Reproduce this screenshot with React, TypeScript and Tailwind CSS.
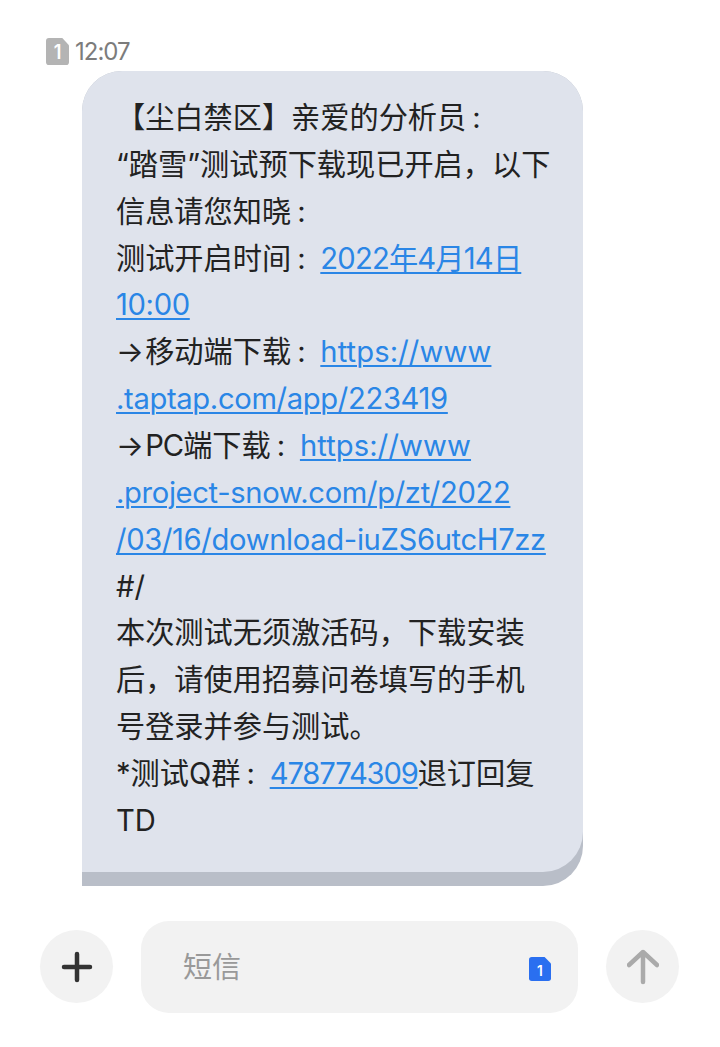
import React from "react"

const FONT = "font-['Inter','Noto_Sans_CJK_SC',sans-serif]"

const Link = ({ children, tracking = "tracking-[-0.35px]" }: { children: React.ReactNode; tracking?: string }) => (
  <span className={`${tracking} text-[#2a86e6] underline decoration-[2px] underline-offset-[3px]`}>{children}</span>
)

// colon takes a full-width box in the reference, a little left of centre
const Colon = () => <span className="inline-block w-[1em] pl-[6px] text-left">:</span>

const Arrow = () => <span className="inline-block w-[1em]">→</span>

const Line = ({ children }: { children: React.ReactNode }) => (
  <div className="h-[46.87px] whitespace-nowrap leading-[46.87px]">{children}</div>
)

const SimIcon = ({ className, digitSize }: { className: string; digitSize: number }) => (
  <svg viewBox="0 0 24 26" preserveAspectRatio="none" className={className}>
    <path d="M3 0H17L24 7V23a3 3 0 0 1-3 3H3a3 3 0 0 1-3-3V3a3 3 0 0 1 3-3Z" fill="currentColor" />
    <text x="12" y="20.5" textAnchor="middle" fontSize={digitSize} fontWeight="600" fontFamily="Inter, sans-serif" fill="#fff">
      1
    </text>
  </svg>
)

export default function App() {
  return (
    <div className={`flex h-[1047px] w-[720px] flex-col bg-white ${FONT}`}>
      {/* Timestamp */}
      <div className="mt-[38px] flex h-[27px] items-center pl-[46px]">
        <SimIcon className="h-[27px] w-[23px] text-[#b4b4b4]" digitSize={19} />
        <span className="ml-[6px] text-[24px] tracking-[-1px] text-[#7c7c7c]">12:07</span>
      </div>

      {/* Message bubble */}
      <div className="ml-[82px] mt-[6px] w-[501px] rounded-[40px] rounded-bl-none bg-[#b9bec8] pb-[14px]">
        <div className="rounded-[40px] rounded-bl-none bg-[#dfe3ec] pb-[27px] pl-[34px] pt-[24px] text-[29.2px] text-[#222]">
          <Line>
            【尘白禁区】亲爱的分析员
            <Colon />
          </Line>
          <Line>“踏雪”测试预下载现已开启，以下</Line>
          <Line>
            信息请您知晓
            <Colon />
          </Line>
          <Line>
            测试开启时间
            <Colon />
            <Link tracking="tracking-[-0.8px]">2022年4月14日</Link>
          </Line>
          <Line>
            <Link>10:00</Link>
          </Line>
          <Line>
            <Arrow />
            移动端下载
            <Colon />
            <Link tracking="tracking-[0.1px]">https://www</Link>
          </Line>
          <Line>
            <Link>.taptap.com/app/223419</Link>
          </Line>
          <Line>
            <Arrow />
            <span className="tracking-[-1px]">PC</span>端下载
            <Colon />
            <Link tracking="tracking-[0.1px]">https://www</Link>
          </Line>
          <Line>
            <Link>.project-snow.com/p/zt/2022</Link>
          </Line>
          <Line>
            <Link>/03/16/download-iuZS6utcH7zz</Link>
          </Line>
          <Line>#/</Line>
          <Line>本次测试无须激活码，下载安装</Line>
          <Line>后，请使用招募问卷填写的手机</Line>
          <Line>号登录并参与测试。</Line>
          <Line>
            *测试Q群
            <Colon />
            <Link tracking="tracking-[-1.15px]">478774309</Link>退订回复
          </Line>
          <Line>TD</Line>
        </div>
      </div>

      {/* Composer */}
      <div className="mt-[35px] flex items-center pl-[40px]">
        <div className="flex h-[73px] w-[73px] items-center justify-center rounded-full bg-[#f2f2f2]">
          <svg viewBox="0 0 32 32" className="h-[32px] w-[32px]" fill="none" stroke="#333" strokeWidth="4.5" strokeLinecap="round">
            <path d="M16 3V29M3 16H29" />
          </svg>
        </div>
        <div className="ml-[28px] flex h-[92px] w-[437px] items-center justify-between rounded-[28px] bg-[#f2f2f2] pl-[42px] pr-[27px]">
          <span className="mt-[2px] text-[29px] text-[#999]">短信</span>
          <SimIcon className="mt-[5px] h-[24px] w-[22px] text-[#2a6ff0]" digitSize={15} />
        </div>
        <div className="ml-[28px] flex h-[73px] w-[73px] items-center justify-center rounded-full bg-[#f2f2f2]">
          <svg viewBox="0 0 32 36" className="h-[36px] w-[32px]" fill="none" stroke="#aaa" strokeWidth="4.5" strokeLinecap="round" strokeLinejoin="round">
            <path d="M16 33V3M2 16L16 3L30 16" />
          </svg>
        </div>
      </div>
    </div>
  )
}
